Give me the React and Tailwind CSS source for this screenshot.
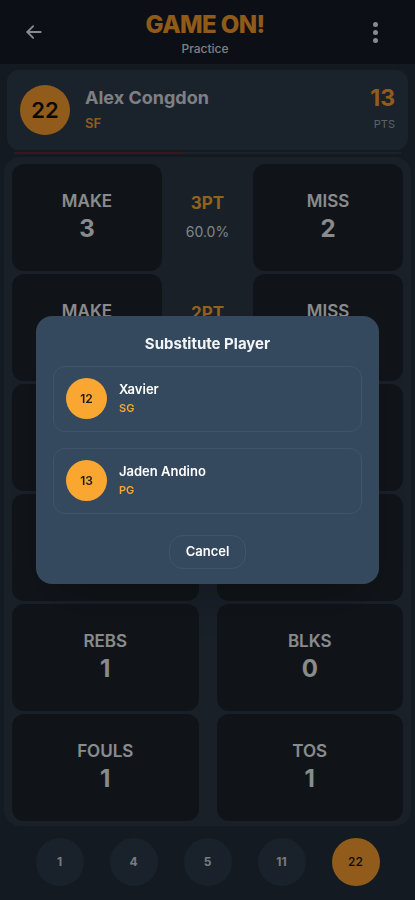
import React from "react"

const subs = [
    { num: 12, name: 'Xavier', pos: 'SG' },
    { num: 13, name: 'Jaden Andino', pos: 'PG' },
]

const roster = [1, 4, 5, 11, 22]

const StatCell = ({ label, value }) => (
    <div className="bg-[#1c2229] rounded-xl flex flex-col items-center justify-center h-full">
        <p className="text-[17px] font-semibold text-[#e6e8eb] leading-tight">{label}</p>
        <p className="text-[24px] font-bold text-[#e6e8eb] leading-tight mt-0.5">{value}</p>
    </div>
)

const ShotRow = ({ type, pct, make, miss }) => (
    <div className="grid grid-cols-[150px_1fr_150px] h-[107px]">
        <StatCell label="MAKE" value={make} />
        <div className="flex flex-col items-center justify-center">
            <p className="text-[17px] font-bold text-[#f5a233] leading-tight">{type}</p>
            <p className="text-[14px] text-[#d8dbe0] mt-1.5">{pct}</p>
        </div>
        <StatCell label="MISS" value={miss} />
    </div>
)

const PairRow = ({ a, b }) => (
    <div className="grid grid-cols-2 gap-[18px] h-[107px]">
        <StatCell label={a[0]} value={a[1]} />
        <StatCell label={b[0]} value={b[1]} />
    </div>
)

const App = () => {
    return (
        <div className="min-h-[900px] bg-[#212c38] font-['Inter',sans-serif] relative">
            {/* header */}
            <div className="h-16 bg-[#151c25] flex items-center justify-between pl-6 pr-[29px] pt-1">
                <svg width="20" height="20" viewBox="0 0 24 24" fill="none" stroke="#e5e7eb" strokeWidth="2.2" strokeLinecap="round" strokeLinejoin="round" className="-mt-1">
                    <path d="M20 12H4" />
                    <path d="M11 5l-7 7 7 7" />
                </svg>
                <div className="flex flex-col items-center">
                    <p className="text-[24px] font-extrabold text-[#f0962b] leading-tight tracking-tight">GAME ON!</p>
                    <p className="text-[12px] font-medium text-[#d1d5db]">Practice</p>
                </div>
                <div className="flex flex-col gap-[3px] items-center w-5 -mt-1">
                    <span className="block w-[5px] h-[5px] rounded-full bg-[#e5e7eb]" />
                    <span className="block w-[5px] h-[5px] rounded-full bg-[#e5e7eb]" />
                    <span className="block w-[5px] h-[5px] rounded-full bg-[#e5e7eb]" />
                </div>
            </div>

            {/* player card */}
            <div className="mx-[7px] mt-[6px] h-20 rounded-xl bg-[#2c3a48] flex items-center px-[13px]">
                <div className="w-[50px] h-[50px] rounded-full bg-[#f29a2e] flex items-center justify-center text-[22px] font-semibold text-[#111]">22</div>
                <div className="ml-[15px] flex-1">
                    <p className="text-[18px] font-bold text-[#d1d5db] leading-tight">Alex Congdon</p>
                    <p className="text-[13px] font-semibold text-[#f29a2e] mt-1">SF</p>
                </div>
                <div className="flex flex-col items-end">
                    <p className="text-[23px] font-bold text-[#f29a2e] leading-none">13</p>
                    <p className="text-[11px] text-[#9ca3af] mt-1.5">PTS</p>
                </div>
            </div>
            <div className="mx-[14px] mt-[2px] h-[2px] flex">
                <div className="w-[170px] bg-[#5a2a30]" />
                <div className="flex-1 bg-[#2c3a48]" />
            </div>

            {/* stats */}
            <div className="mx-[4px] mt-[3px] rounded-2xl bg-[#2a3643] px-2 pt-[7px] pb-[5px] flex flex-col gap-[3px]">
                <ShotRow type="3PT" pct="60.0%" make={3} miss={2} />
                <ShotRow type="2PT" pct="50.0%" make={2} miss={2} />
                <ShotRow type="FT" pct="100.0%" make={1} miss={0} />
                <PairRow a={['ASTS', 0]} b={['STLS', 0]} />
                <PairRow a={['REBS', 1]} b={['BLKS', 0]} />
                <PairRow a={['FOULS', 1]} b={['TOS', 1]} />
            </div>

            {/* roster */}
            <div className="flex justify-center gap-[26px] pt-3 pb-4">
                {roster.map((n) => (
                    <div
                        key={n}
                        className={`w-12 h-12 rounded-full flex items-center justify-center text-[12px] font-bold ${n === 22 ? 'bg-[#f29a2e] text-[#111] font-medium' : 'bg-[#2b3846] text-[#c9ced6]'}`}
                    >
                        {n}
                    </div>
                ))}
            </div>

            {/* modal */}
            <div className="fixed inset-0 bg-black/40 flex items-center justify-center px-9">
                <div className="w-full bg-[#34495e] rounded-2xl px-[17px] pt-[17px] pb-[15px] shadow-2xl">
                    <p className="text-center text-[15px] font-bold text-[#f3f6f9]">Substitute Player</p>
                    <div className="mt-[10px] flex flex-col gap-[16px]">
                        {subs.map((s) => (
                            <div key={s.num} className="h-[66px] rounded-xl border border-[#3f556b] flex items-center px-[12px]">
                                <div className="w-[41px] h-[41px] rounded-full bg-[#f9a731] flex items-center justify-center text-[12px] font-semibold text-[#1a1a1a]">{s.num}</div>
                                <div className="ml-[12px]">
                                    <p className="text-[13px] font-semibold text-white leading-tight">{s.name}</p>
                                    <p className="text-[11px] font-semibold text-[#f9a731] mt-[2px]">{s.pos}</p>
                                </div>
                            </div>
                        ))}
                    </div>
                    <div className="flex justify-center mt-[21px]">
                        <button className="h-[34px] px-4 rounded-[14px] border border-[#3f556b] text-[13px] font-semibold text-white">Cancel</button>
                    </div>
                </div>
            </div>
        </div>
    )
}

export default App
